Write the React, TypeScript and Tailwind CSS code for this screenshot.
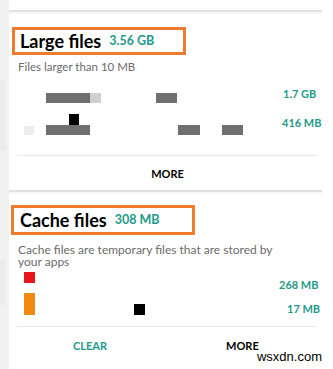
import React from "react";

const font = { fontFamily: "Lato, 'Open Sans', sans-serif" };

export default function App() {
  return (
    <div className="w-[333px] h-[369px] bg-white overflow-hidden flex" style={font}>
      <div className="w-[9px] bg-[#f1f1f1] shrink-0 flex flex-col">
        <div className="h-[80px]" />
        <div className="h-[70px] bg-[#ebebeb] w-[6px]" />
        <div className="h-[110px]" />
        <div className="h-[45px] bg-[#ebebeb] w-[6px]" />
      </div>
      <div className="w-[313px] shrink-0 flex flex-col bg-[#f7f7f7]">
        {/* previous card remnant */}
        <div className="h-[12px] bg-white border-b-2 border-[#e2e2e2]" />
        <div className="h-[2px]" />
        {/* Large files card */}
        <div className="h-[178px] bg-white border-b-2 border-[#e0e0e0] flex flex-col">
          <div className="mt-[13px] ml-[3px] w-[174px] h-[28px] border-[3px] border-[#f07b2d] flex items-center pl-[5px] gap-[8px]">
            <span className="text-[18px] font-bold text-black leading-none">Large files</span>
            <span className="text-[12.5px] font-bold text-[#1f9a8b] leading-none">3.56 GB</span>
          </div>
          <div className="mt-[6px] ml-[9px] text-[11.5px] text-[#6b6b6b] leading-none">Files larger than 10 MB</div>
          <div className="h-[80px] relative mt-[2px]">
            <span className="absolute left-[274px] top-[13px] text-[11px] font-bold text-[#1f9a8b] leading-none">1.7 GB</span>
            <span className="absolute left-[273px] top-[42px] text-[11px] font-bold text-[#1f9a8b] leading-none">416 MB</span>
            <div className="absolute left-[37px] top-[18px] w-[44px] h-[10px] bg-[#6f6f6f]" />
            <div className="absolute left-[81px] top-[18px] w-[11px] h-[10px] bg-[#cfcfcf]" />
            <div className="absolute left-[147px] top-[18px] w-[21px] h-[10px] bg-[#6f6f6f]" />
            <div className="absolute left-[60px] top-[39px] w-[10px] h-[11px] bg-black" />
            <div className="absolute left-[37px] top-[50px] w-[44px] h-[10px] bg-[#6f6f6f]" />
            <div className="absolute left-[15px] top-[51px] w-[10px] h-[9px] bg-[#ececec]" />
            <div className="absolute left-[169px] top-[50px] w-[22px] h-[10px] bg-[#6f6f6f]" />
            <div className="absolute left-[213px] top-[50px] w-[21px] h-[10px] bg-[#6f6f6f]" />
          </div>
          <div className="ml-[8px] w-[299px] h-[1px] bg-[#e8e8e8]" />
          <div className="flex justify-center mt-[12px]">
            <span className="text-[11px] font-bold text-black leading-none ml-[4px]">MORE</span>
          </div>
        </div>
        <div className="h-[2px]" />
        {/* Cache files card */}
        <div className="flex-1 bg-white flex flex-col">
          <div className="mt-[11px] ml-[2px] w-[184px] h-[30px] border-[3px] border-[#f07b2d] flex items-center pl-[6px] gap-[8px]">
            <span className="text-[18px] font-bold text-black leading-none">Cache files</span>
            <span className="text-[12.5px] font-bold text-[#1f9a8b] leading-none">308 MB</span>
          </div>
          <div className="mt-[9px] ml-[9px] w-[274px] text-[12px] text-[#6b6b6b] leading-[12px]">
            Cache files are temporary files that are stored by your apps
          </div>
          <div className="h-[58px] relative">
            <div className="absolute left-[15px] top-[4px] w-[11px] h-[11px] bg-[#e8141c]" />
            <div className="absolute left-[15px] top-[25px] w-[11px] h-[22px] bg-[#f08a12]" />
            <div className="absolute left-[125px] top-[36px] w-[11px] h-[11px] bg-black" />
            <span className="absolute left-[270px] top-[11px] text-[11px] font-bold text-[#1f9a8b] leading-none">268 MB</span>
            <span className="absolute left-[278px] top-[35px] text-[11px] font-bold text-[#1f9a8b] leading-none">17 MB</span>
          </div>
          <div className="ml-[8px] w-[299px] h-[1px] bg-[#e8e8e8]" />
          <div className="flex mt-[13px]">
            <span className="ml-[64px] text-[11px] font-bold text-[#1f9a8b] leading-none">CLEAR</span>
            <span className="ml-[119px] text-[11px] font-bold text-black leading-none">MORE</span>
          </div>
        </div>
      </div>
      <div className="flex-1 bg-white relative">
        <span
          className="absolute right-[11px] top-[350px] text-[13px] text-black leading-none whitespace-nowrap"
          style={{ fontFamily: "'Liberation Sans', Arial, sans-serif" }}
        >
          wsxdn.com
        </span>
      </div>
    </div>
  );
}
